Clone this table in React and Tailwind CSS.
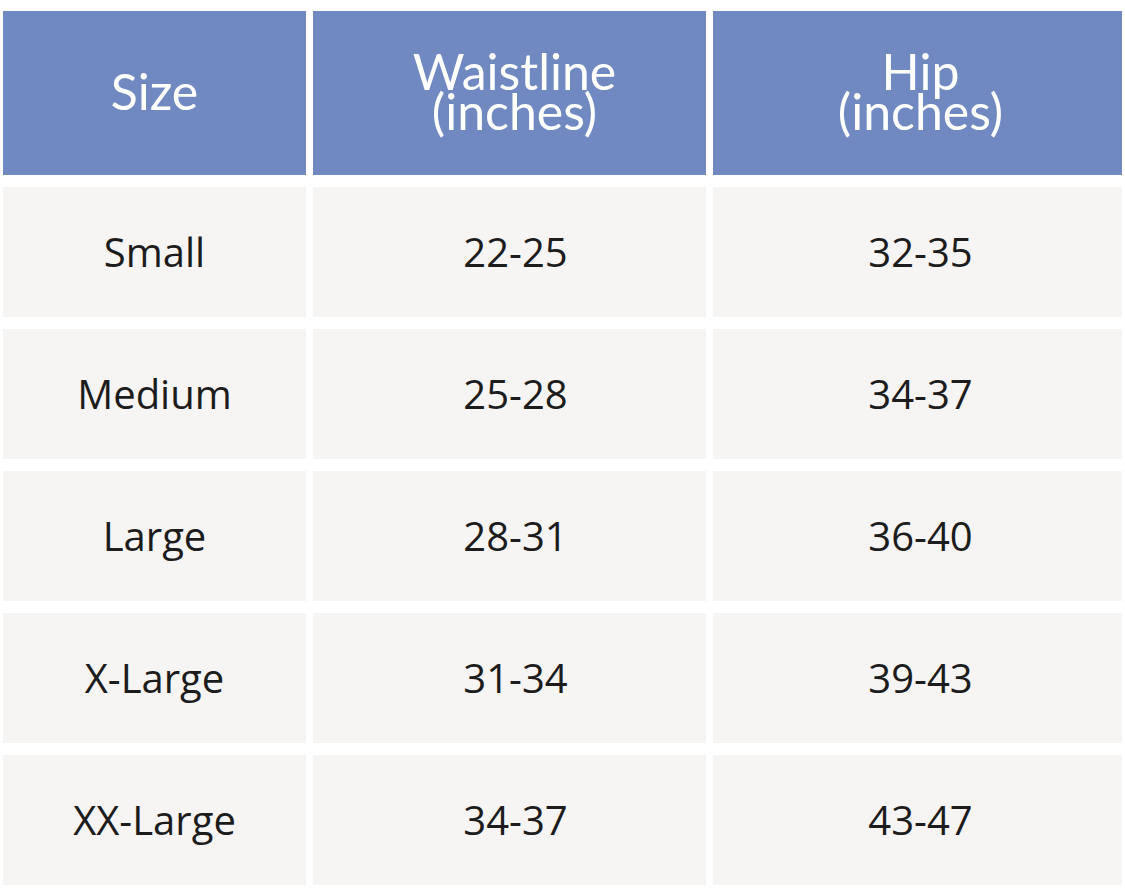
import React from 'react';

const rows = [
  { size: 'Small', waist: '22-25', hip: '32-35' },
  { size: 'Medium', waist: '25-28', hip: '34-37' },
  { size: 'Large', waist: '28-31', hip: '36-40' },
  { size: 'X-Large', waist: '31-34', hip: '39-43' },
  { size: 'XX-Large', waist: '34-37', hip: '43-47' }
];

const cols = 'grid grid-cols-[303px_393px_409px] gap-x-[7px]';

const App = () => {
  return (
    <div className="w-[1125px] h-[890px] bg-white pt-[11px] px-[3px] overflow-hidden">
      {/* Header */}
      <div className={`${cols} h-[164px] text-white font-['Lato',sans-serif] text-[50px]`}>
        <div className="bg-[#7089c1] flex items-center justify-center pb-[4px]">Size</div>
        <div className="bg-[#7089c1] flex flex-col items-center justify-center leading-[0.8] pl-[10px] pb-[4px]">
          <span>Waistline</span>
          <span>(inches)</span>
        </div>
        <div className="bg-[#7089c1] flex flex-col items-center justify-center leading-[0.8] pl-[6px] pb-[4px]">
          <span>Hip</span>
          <span>(inches)</span>
        </div>
      </div>

      {/* Body rows */}
      <div className="flex flex-col gap-y-[12px] mt-[12px]">
        {rows.map((row) => (
          <div key={row.size} className={`${cols} h-[130px] text-[40px] text-[#1c1c1c] font-['Open_Sans',sans-serif]`}>
            <div className="bg-[#f7f4f4] flex items-center justify-center">{row.size}</div>
            <div className="bg-[#f7f4f4] flex items-center justify-center pl-[12px]">{row.waist}</div>
            <div className="bg-[#f7f4f4] flex items-center justify-center pl-[6px]">{row.hip}</div>
          </div>
        ))}
      </div>
    </div>
  );
};

export default App;
